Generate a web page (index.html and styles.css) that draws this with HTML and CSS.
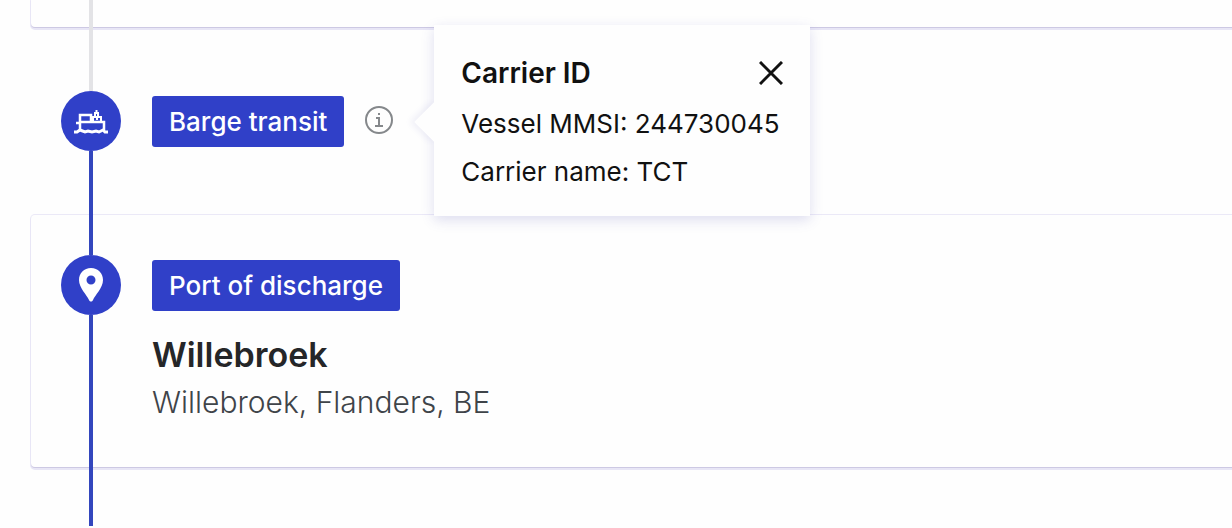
FILE: index.html
```
<!DOCTYPE html>
<html lang="en">
<head>
	<title>Shipment timeline</title>
	<meta charset="utf-8">
	<link rel="stylesheet" href="styles.css">
</head>
<body>
	<!--timeline start-->
	<main class="timeline">
		<section class="step step_prev card">
			<div class="rail">
				<span class="line line_grey line_end"></span>
			</div>
		</section>

		<section class="step step_transit">
			<div class="rail">
				<span class="line line_grey"></span>
				<span class="marker">
					<svg width="36" height="30" viewBox="0 0 36 30" fill="none" stroke="#fff" stroke-width="2" aria-hidden="true">
						<path d="M7 24V9h11v7h13v8M7 16h11M3 17h4" stroke-width="2.500"/>
						<path d="M20 15v-4h8v4M24 14v-3M22 10V7h3v3M23.500 7V4"/>
						<path d="M1 26h3l3-2 5 2 3-1 4 1 4-1 3 1 4-2 2 2h3" stroke-width="3"/>
					</svg>
				</span>
				<span class="line line_end"></span>
			</div>
			<div class="content">
				<div class="row">
					<span class="badge">Barge transit</span>
					<div class="info">
						<button class="info_btn" type="button" aria-label="Carrier details">
							<svg width="30" height="30" viewBox="0 0 30 30" fill="none" stroke="#85888b" stroke-width="2" aria-hidden="true">
								<circle cx="15" cy="15" r="13"/>
								<path d="M12 13h3v8M11 21h8M14 9h2"/>
							</svg>
						</button>
						<!--carrier popup-->
						<div class="popup">
							<div class="popup_head">
								<h3>Carrier ID</h3>
								<button class="close" type="button" aria-label="Close">
									<svg width="24" height="24" viewBox="0 0 24 24" stroke="#111" stroke-width="3" aria-hidden="true">
										<path d="M1 1l22 22M23 1L1 23"/>
									</svg>
								</button>
							</div>
							<p>Vessel MMSI: 244730045</p>
							<p>Carrier name: TCT</p>
						</div>
					</div>
				</div>
			</div>
		</section>

		<section class="step step_port card">
			<div class="rail">
				<span class="line"></span>
				<span class="marker">
					<svg width="24" height="34" viewBox="0 0 24 34" fill="#fff" fill-rule="evenodd" aria-hidden="true">
						<path d="M12 0C5 0 0 5 0 12c0 8 8 15 10 20 1 2 3 2 4 0 2-5 10-12 10-20C24 5 19 0 12 0zm0 7.500a4.500 4.500 0 1 1 0 9 4.500 4.500 0 0 1 0-9z"/>
					</svg>
				</span>
				<span class="line line_end"></span>
			</div>
			<div class="content">
				<span class="badge">Port of discharge</span>
				<h2>Willebroek</h2>
				<p class="place">Willebroek, Flanders, BE</p>
			</div>
		</section>

		<section class="step step_next">
			<div class="rail">
				<span class="line line_end"></span>
			</div>
		</section>
	</main>
	<!--end timeline-->
</body>
</html>
```
FILE: styles.css
```
*{margin:0;padding:0;box-sizing:border-box;}
body{background:#fefefe;font-family:Inter,"Liberation Sans",sans-serif;color:#111;overflow-x:hidden;}
button{background:none;border:0;cursor:pointer;}
svg{display:block;}
/*timeline start*/
.timeline{padding-left:31px;}
.step{display:flex;gap:31px;padding-left:30px;}
.card{background:#fefefe;border-radius:4px 0 0 4px;box-shadow:0 1px 0 #cdc9e3,0 2px 0 1px #e8e6f6,0 0 0 1px #ebe9f7;}
.step_prev{height:27px;border-radius:0 0 0 4px;}
.step_next{height:59px;}
.rail{flex:none;width:60px;display:flex;flex-direction:column;align-items:center;}
.line{width:4px;height:40px;background:#3346bd;}
.line_grey{background:#e3e3e6;}
.line_end{height:auto;flex:1;}
.step_transit .line_grey{height:64px;}
.marker{width:60px;height:60px;border-radius:50%;background:#3040c8;display:flex;align-items:center;justify-content:center;}
.content{flex:1;padding:45px 0 40px;}
.step_transit .content{padding:69px 0 68px;}
.row{display:flex;align-items:center;gap:20px;}
.badge{display:inline-block;padding:0 17px;line-height:51px;border-radius:3px;background:#3040c8;color:#fff;font-size:26px;font-weight:500;}
h2{margin-top:22px;font-size:34px;line-height:44px;font-weight:600;color:#252628;}
.place{font-size:30px;line-height:50px;font-weight:300;color:#3f4449;}
/*popup*/
.info{position:relative;}
.popup{position:absolute;left:70px;top:-80px;z-index:1;width:376px;padding:24px 27px 20px;background:#fefefe;box-shadow:0 4px 12px rgba(70,70,170,.18);white-space:nowrap;}
.popup:before{content:"";position:absolute;left:-14px;top:83px;width:28px;height:28px;background:linear-gradient(45deg,#fefefe 50%,transparent 50%);box-shadow:-3px 3px 6px rgba(70,70,170,.08);transform:rotate(45deg);clip-path:polygon(-10px -10px,28px 28px,38px 38px,-10px 38px);}
.popup_head{display:flex;justify-content:space-between;align-items:center;margin-bottom:3px;}
.popup h3{font-size:28px;line-height:48px;font-weight:600;}
.popup p{position:relative;font-size:26px;line-height:48px;}
/*end timeline*/
```
